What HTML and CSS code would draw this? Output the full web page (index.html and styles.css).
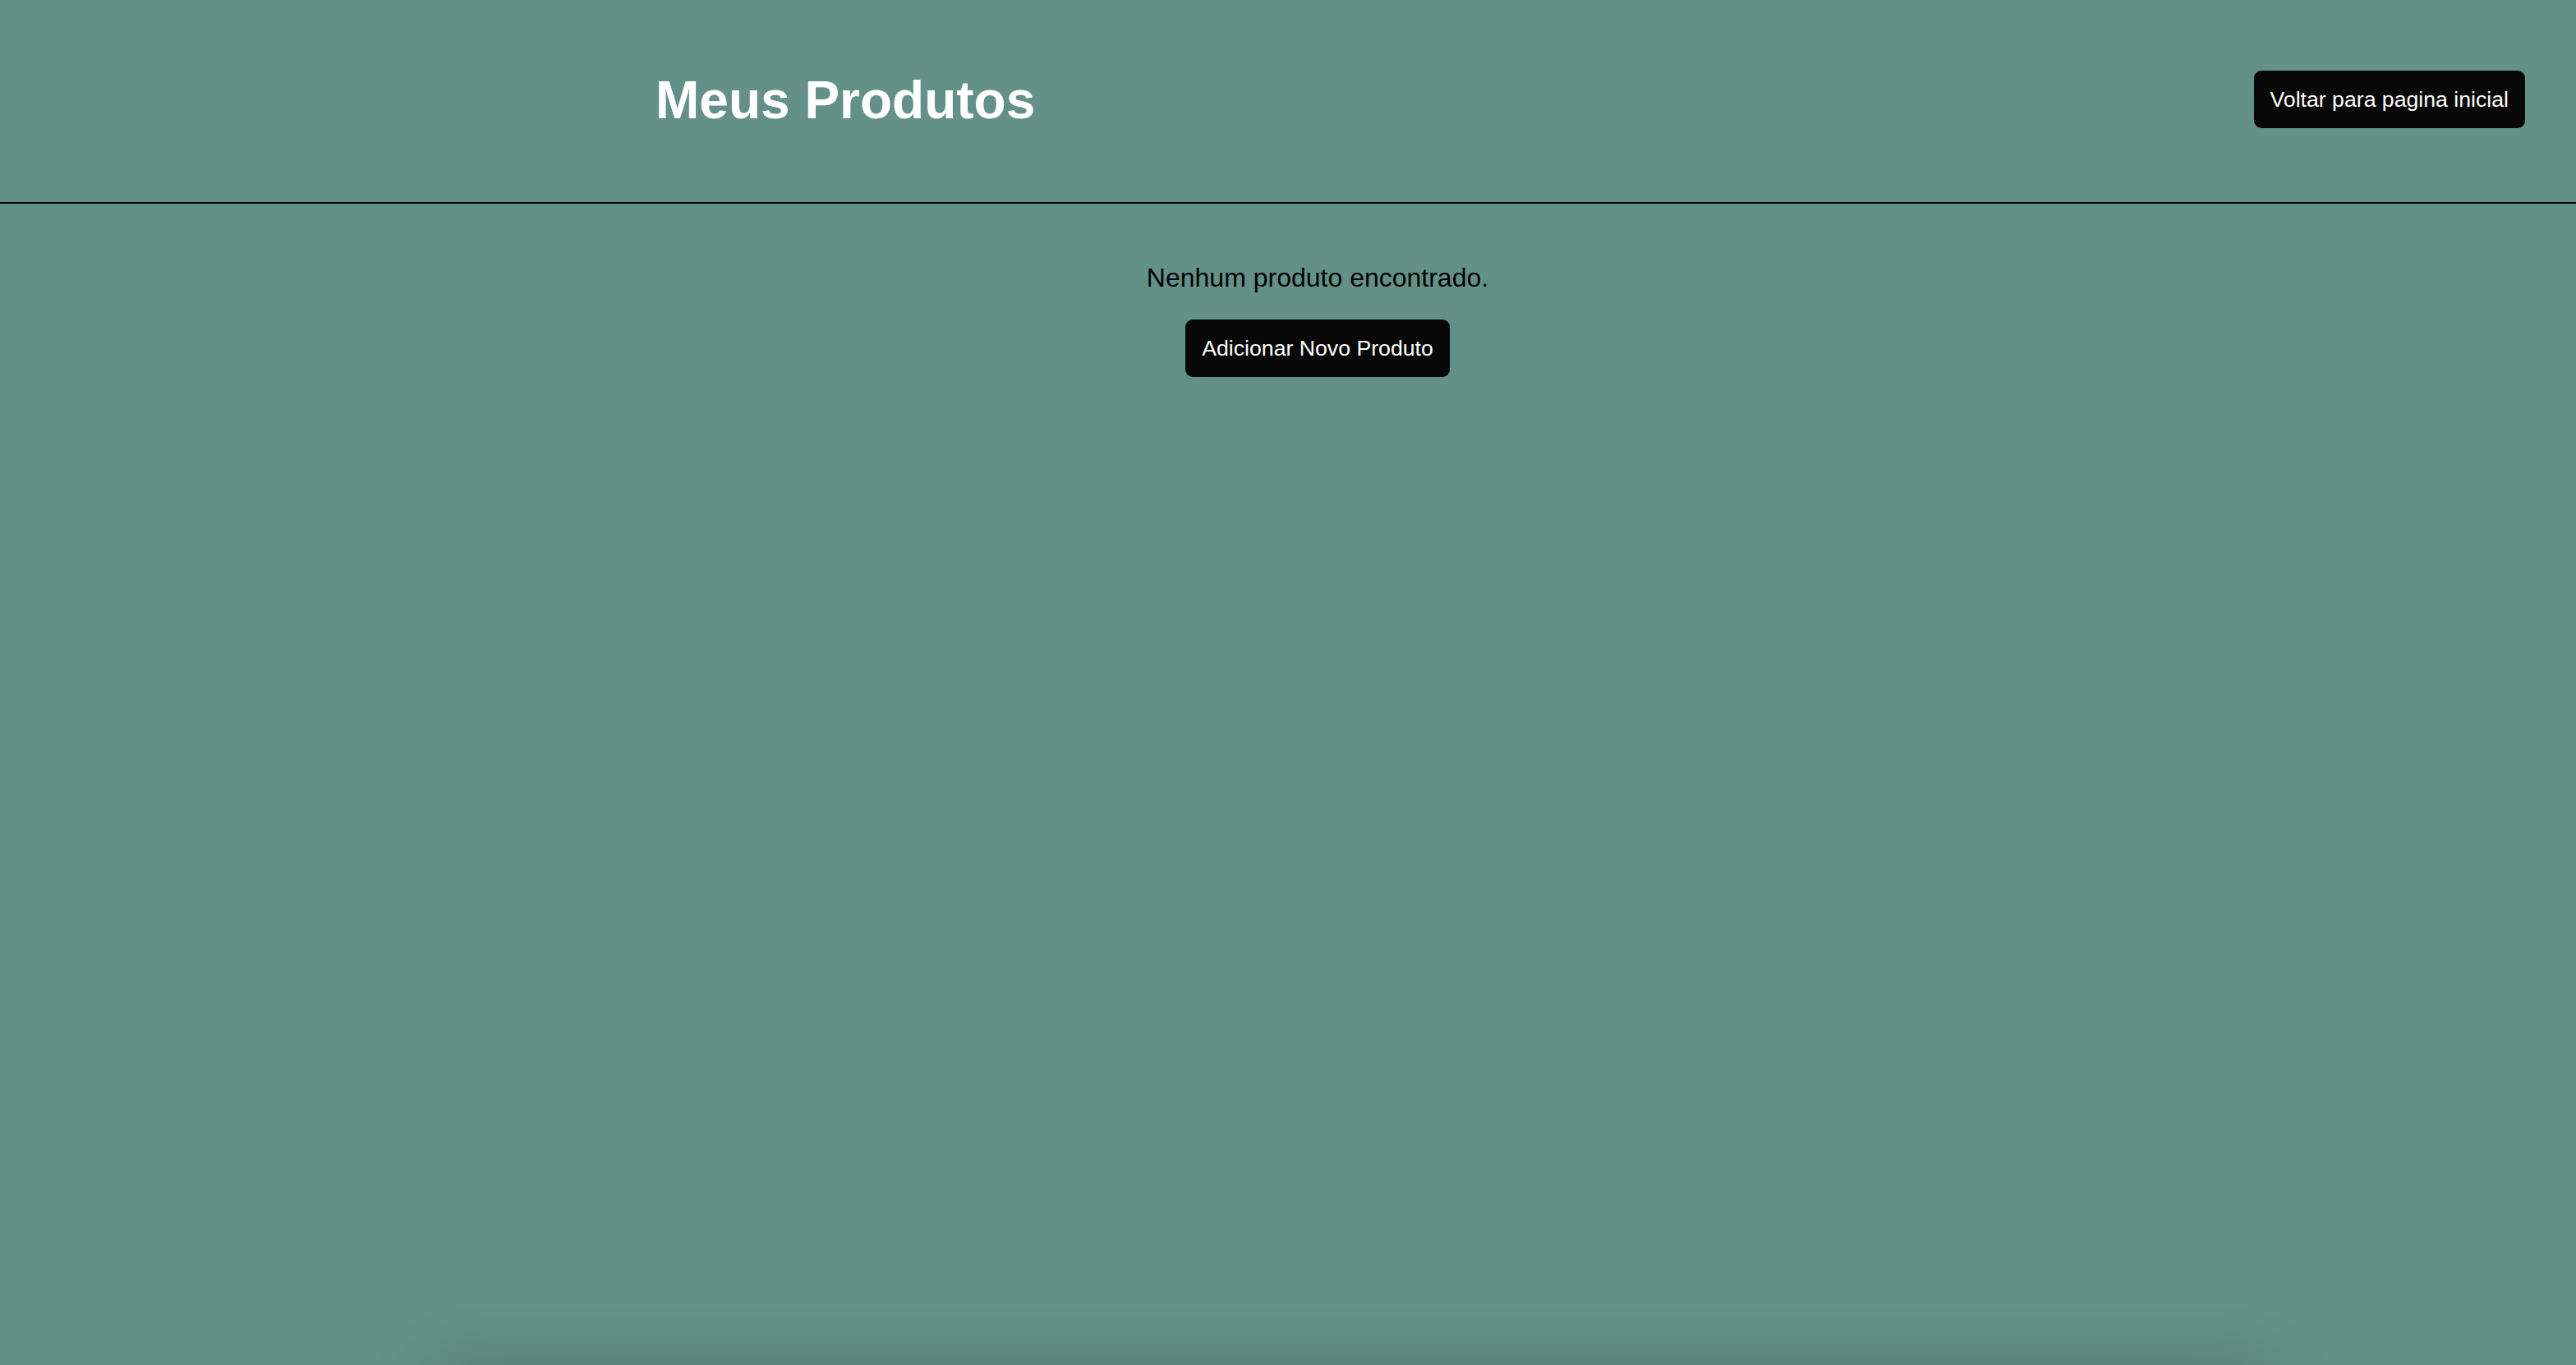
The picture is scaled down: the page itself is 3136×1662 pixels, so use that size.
FILE: index.html
```html
<!DOCTYPE html>
<html lang="pt-BR">
<head>
<meta charset="utf-8">
<title>Meus Produtos</title>
<link rel="stylesheet" href="styles.css">
</head>
<body>
<header class="topbar">
  <h1 class="title">Meus Produtos</h1>
  <button class="btn btn-back">Voltar para pagina inicial</button>
</header>
<main class="content">
  <p class="empty">Nenhum produto encontrado.</p>
  <button class="btn btn-add">Adicionar Novo Produto</button>
</main>
<div class="bottom-shadow"></div>
</body>
</html>
```

FILE: styles.css
```css
html, body {
  margin: 0;
  padding: 0;
  height: 100%;
  overflow: hidden;
}
body {
  background: #639187;
  font-family: "Liberation Sans", Arial, sans-serif;
  color: #000;
}
.topbar {
  height: 246px;
  border-bottom: 2px solid #000;
  display: flex;
  align-items: center;
  justify-content: space-between;
  padding: 0 62px 0 798px;
  box-sizing: content-box;
}
.title {
  margin: 0;
  font-size: 64px;
  font-weight: bold;
  color: #fff;
  line-height: 1.15;
}
.btn {
  background: #080808;
  color: #fff;
  border: none;
  border-radius: 9px;
  font-family: "Liberation Sans", Arial, sans-serif;
  font-size: 26.67px;
  padding: 20px;
  line-height: 1.15;
}
.btn-back {
  margin-top: -4px;
}
.content {
  display: flex;
  flex-direction: column;
  align-items: center;
  padding-left: 72px;
  padding-top: 72px;
}
.empty {
  margin: 0 0 32px;
  font-size: 32px;
  line-height: 1.15;
}
.bottom-shadow {
  position: fixed;
  top: 1690px;
  left: 540px;
  width: 2210px;
  height: 200px;
  box-shadow: 0 0 90px rgba(0, 0, 0, 0.35);
}
```
